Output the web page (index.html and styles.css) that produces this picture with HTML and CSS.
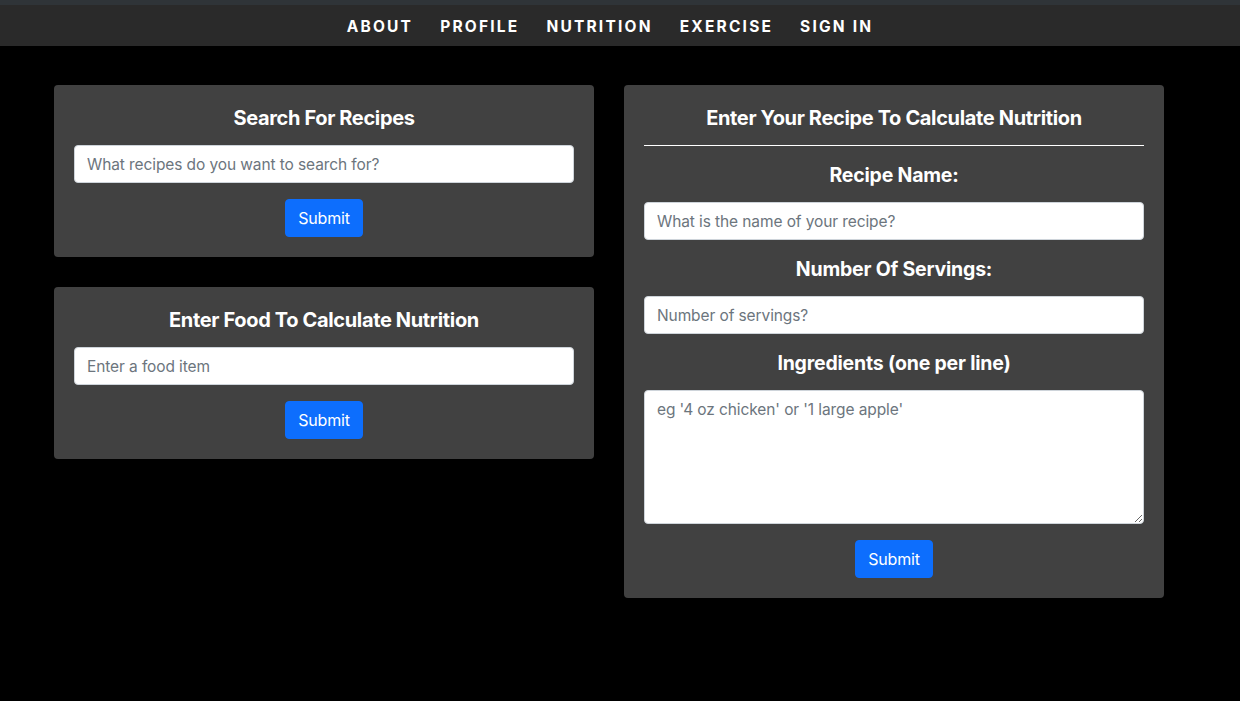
FILE: index.html
```html
<!DOCTYPE html>
<html lang="en">
<head>
<meta charset="utf-8">
<title>Nutrition</title>
<link rel="stylesheet" href="styles.css">
</head>
<body>
<div class="topstrip"></div>
<nav class="navbar">
  <a href="#">About</a>
  <a href="#">Profile</a>
  <a href="#">Nutrition</a>
  <a href="#">Exercise</a>
  <a href="#">Sign In</a>
</nav>
<main class="content">
  <div class="column">
    <form class="card">
      <h2 class="card-title">Search For Recipes</h2>
      <input class="field" type="text" placeholder="What recipes do you want to search for?">
      <button class="btn" type="button">Submit</button>
    </form>
    <form class="card">
      <h2 class="card-title">Enter Food To Calculate Nutrition</h2>
      <input class="field" type="text" placeholder="Enter a food item">
      <button class="btn" type="button">Submit</button>
    </form>
  </div>
  <div class="column">
    <form class="card">
      <h2 class="card-title">Enter Your Recipe To Calculate Nutrition</h2>
      <hr class="divider">
      <label class="label">Recipe Name:</label>
      <input class="field" type="text" placeholder="What is the name of your recipe?">
      <label class="label">Number Of Servings:</label>
      <input class="field" type="text" placeholder="Number of servings?">
      <label class="label">Ingredients (one per line)</label>
      <textarea class="field area" rows="5" placeholder="eg '4 oz chicken' or '1 large apple'"></textarea>
      <button class="btn" type="button">Submit</button>
    </form>
  </div>
</main>
</body>
</html>
```
FILE: styles.css
```css
* { box-sizing: border-box; }
html, body { margin: 0; padding: 0; background: #000; }
body {
  font-family: Inter, "Liberation Sans", Arial, sans-serif;
  color: #fff;
  height: 701px;
}
.topstrip { height: 5px; background: #2f3438; }
.navbar {
  height: 41px;
  background: #2a2a2a;
  display: flex;
  justify-content: center;
  align-items: center;
  gap: 27px;
  padding: 3px 20px 0 0;
}
.navbar a {
  color: #fff;
  text-decoration: none;
  text-transform: uppercase;
  font-weight: 700;
  font-size: 15.5px;
  letter-spacing: 2.2px;
  line-height: 20px;
}
.content {
  display: grid;
  grid-template-columns: 540px 540px;
  column-gap: 30px;
  padding: 39px 0 0 54px;
  align-items: start;
}
.column { display: flex; flex-direction: column; gap: 30px; }
.card {
  background: #414141;
  border-radius: 4px;
  padding: 20px;
  display: flex;
  flex-direction: column;
  align-items: center;
  gap: 16px;
  margin: 0;
}
.card-title {
  margin: 0 0 -1px;
  font-size: 20px;
  font-weight: 700;
  line-height: 24px;
  letter-spacing: -0.35px;
  padding-top: 1px;
}
.divider {
  width: 100%;
  margin: 0;
  border: 0;
  border-top: 1px solid #fff;
  height: 0;
}
.label {
  font-size: 19.5px;
  font-weight: 700;
  line-height: 24px;
  letter-spacing: -0.2px;
  padding-top: 1px;
  margin-bottom: -1px;
}
.field {
  width: 100%;
  height: 38px;
  padding: 6px 12px;
  font-family: inherit;
  font-size: 15.5px;
  line-height: 24px;
  color: #212529;
  background: #fff;
  border: 1px solid #ced4da;
  border-radius: 4px;
  margin: 0;
  letter-spacing: -0.1px;
}
.field::placeholder { color: #6c757d; opacity: 1; }
.area { height: 134px; resize: vertical; padding-top: 7px; }
.btn {
  background: #0d6efd;
  color: #fff;
  border: 1px solid #0d6efd;
  border-radius: 4px;
  font-family: inherit;
  font-size: 16px;
  line-height: 24px;
  padding: 6px 12px;
  width: 78px;
  height: 38px;
  letter-spacing: -0.2px;
}
```
